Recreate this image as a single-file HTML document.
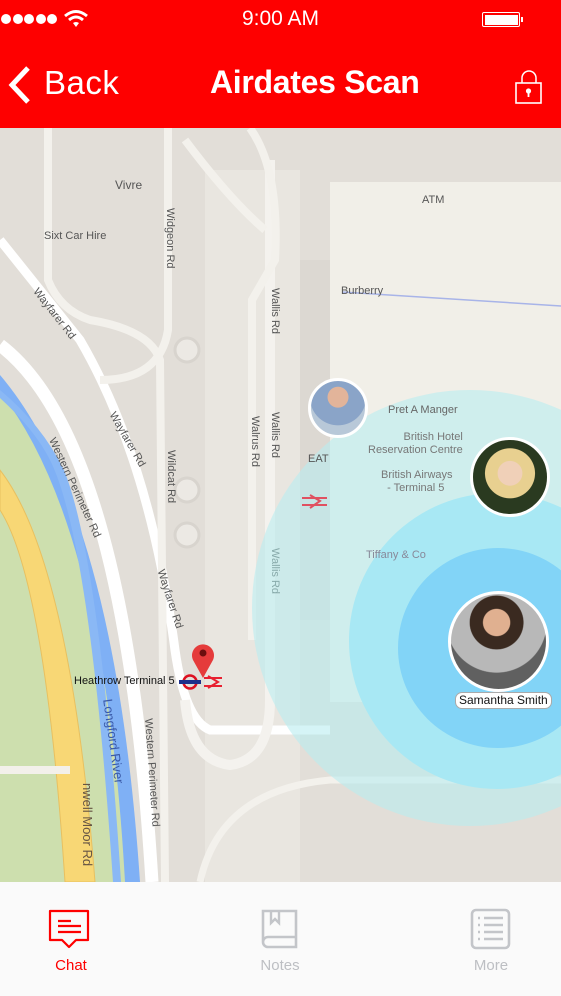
<!DOCTYPE html>
<html><head><meta charset="utf-8">
<style>
*{margin:0;padding:0;box-sizing:border-box}
body{width:561px;height:996px;overflow:hidden;font-family:"Liberation Sans",sans-serif;background:#fafafa;position:relative}
.hdr{position:absolute;left:0;top:0;width:561px;height:128px;background:#fe0000;color:#fff}
.map{position:absolute;left:0;top:128px;width:561px;height:754px;overflow:hidden;background:#e2ded8}
.tab{position:absolute;top:882px;left:0;width:561px;height:114px;background:#fafafa}
.t{position:absolute;font-size:11px;color:#555;white-space:nowrap}
.av{position:absolute;border-radius:50%;border:3px solid #fff;overflow:hidden}
.d{width:10px;height:10px;border-radius:50%;background:#fff;display:block}
</style></head><body>
<div class="hdr">
  <div style="position:absolute;left:1px;top:14px;display:flex;gap:1.5px">
    <span class="d"></span><span class="d"></span><span class="d"></span><span class="d"></span><span class="d"></span>
  </div>
  <svg style="position:absolute;left:63px;top:9px" width="26" height="20" viewBox="0 0 26 20"><path d="M2 7 Q13 -2 24 7" stroke="#fff" stroke-width="3" fill="none"/><path d="M6 11 Q13 5 20 11" stroke="#fff" stroke-width="3" fill="none"/><path d="M13 18 L10 14 Q13 12 16 14Z" fill="#fff"/></svg>
  <div style="position:absolute;left:0;width:561px;top:7px;text-align:center;font-size:21px">9:00 AM</div>
  <div style="position:absolute;left:482px;top:12px;width:38px;height:15px;border:1.5px solid #fff;border-radius:2px;padding:1.5px"><div style="background:#fff;width:100%;height:100%"></div></div>
  <div style="position:absolute;left:521px;top:17px;width:2px;height:5px;background:#fff"></div>
  <svg style="position:absolute;left:6px;top:65px" width="26" height="40" viewBox="0 0 26 40"><path d="M22 3 L6 20 L22 37" stroke="#fff" stroke-width="5" fill="none"/></svg>
  <div style="position:absolute;left:44px;top:64px;font-size:33px;font-weight:300;letter-spacing:0.5px">Back</div>
  <div style="position:absolute;left:210px;top:64px;font-size:32px;font-weight:bold;letter-spacing:-0.3px">Airdates Scan</div>
  <svg style="position:absolute;left:513px;top:69px" width="32" height="36" viewBox="0 0 32 36"><path d="M9 14 V9 A7 7 0 0 1 23 9 V14" stroke="#fff" stroke-width="1.5" fill="none"/><rect x="3" y="14" width="25" height="20" stroke="#fff" stroke-width="1.6" fill="none"/><circle cx="15.5" cy="22" r="2.6" fill="#fff"/><rect x="14.6" y="23" width="1.8" height="5" fill="#fff"/></svg>
</div>

<div class="map">
<svg width="561" height="754" viewBox="0 128 561 754" style="position:absolute;left:0;top:0">
  <rect x="205" y="170" width="95" height="712" fill="#e9e6e0"/>
  <rect x="330" y="182" width="231" height="520" fill="#f1efe8"/>
  <rect x="300" y="260" width="30" height="360" fill="#dcd8d2"/>
  <path d="M0 375 Q115 510 140 882 L0 882Z" fill="#7fb0f5"/>
  <path d="M0 392 Q105 525 125 882 L0 882Z" fill="#cddfae"/>
  <path d="M0 398 Q35 430 50 460 Q90 540 113 882 L121 882 Q100 560 64 470 Q42 425 0 390Z" fill="#8ab8f5"/>
  <path d="M0 470 Q70 560 95 882 L65 882 Q45 580 0 510Z" fill="#f8d775" stroke="#e8c060" stroke-width="1"/>
  <path d="M0 770 L70 770" stroke="#f3f0ea" stroke-width="8"/>
  <path d="M0 345 Q125 440 152 882" stroke="#fff" stroke-width="13" fill="none"/>
  <path d="M0 240 Q40 290 80 340 Q150 460 175 650 Q185 720 210 730 L330 730" stroke="#fff" stroke-width="9" fill="none"/>
  <path d="M185 700 Q190 760 230 765 Q270 760 270 700 L270 160" stroke="#f4f2ee" stroke-width="10" fill="none"/>
  <path d="M48 128 L48 280 Q60 310 90 320 Q150 330 160 360 L165 882" stroke="#f3f1ec" stroke-width="8" fill="none"/>
  <path d="M168 128 L168 330 Q160 380 100 380" stroke="#f3f1ec" stroke-width="8" fill="none"/>
  <path d="M250 128 Q280 170 275 260 L252 300 L252 640" stroke="#f3f1ec" stroke-width="8" fill="none"/>
  <path d="M185 140 Q230 200 265 230" stroke="#f3f1ec" stroke-width="8" fill="none"/>
  <path d="M200 882 Q220 790 330 780 L561 780" stroke="#f3f1ec" stroke-width="7" fill="none"/>
  <circle cx="187" cy="350" r="12" fill="#ece9e4" stroke="#d8d4ce" stroke-width="3"/>
  <circle cx="187" cy="490" r="12" fill="#ece9e4" stroke="#d8d4ce" stroke-width="3"/>
  <circle cx="187" cy="535" r="12" fill="#ece9e4" stroke="#d8d4ce" stroke-width="3"/>
  <path d="M342 292 L561 306" stroke="#a8b4e8" stroke-width="1.5"/>
  <circle cx="470" cy="608" r="218" fill="#b9ecf0" fill-opacity="0.6"/>
  <circle cx="497" cy="641" r="148" fill="#a8e8f4"/>
  <circle cx="498" cy="648" r="100" fill="#82d4f7"/>
  <path d="M203 678 L193 660 A11 11 0 1 1 213 660Z" fill="#e53b3b"/>
  <circle cx="203" cy="653" r="3.5" fill="#6b0e0e"/>
  <circle cx="190" cy="682" r="6.5" fill="none" stroke="#dd1020" stroke-width="2.5"/>
  <rect x="179" y="680" width="22" height="4" fill="#1f2f8a"/>
  <path d="M204 678 L222 678 M204 686 L222 686 M208 676 L218 682 L208 688" stroke="#e82030" stroke-width="2" fill="none"/>
  <path d="M302 498 L327 498 M302 505 L327 505 M310 495 L320 501 L310 508" stroke="#e05060" stroke-width="2" fill="none"/>
</svg>
<div class="t" style="left:115px;top:50px;font-size:12px">Vivre</div>
<div class="t" style="left:44px;top:102px;font-size:11px">Sixt Car Hire</div>
<div class="t" style="left:422px;top:66px">ATM</div>
<div class="t" style="left:341px;top:157px">Burberry</div>
<div class="t" style="left:388px;top:276px;color:#666">Pret A Manger</div>
<div class="t" style="left:368px;top:303px;color:#777;text-align:right;line-height:13px">&nbsp;&nbsp;&nbsp;&nbsp;&nbsp;&nbsp;&nbsp;&nbsp;British Hotel<br>Reservation Centre</div>
<div class="t" style="left:381px;top:341px;color:#777;line-height:13px">British Airways<br>&nbsp;&nbsp;- Terminal 5</div>
<div class="t" style="left:366px;top:421px;color:#889">Tiffany &amp; Co</div>
<div class="t" style="left:308px;top:325px">EAT</div>
<div class="t" style="left:74px;top:547px;color:#111">Heathrow Terminal 5</div>
<div class="t" style="top:80px;transform:rotate(90deg);transform-origin:0 0;left:176px">Widgeon Rd</div>
<div class="t" style="left:281px;top:160px;transform:rotate(90deg);transform-origin:0 0">Wallis Rd</div>
<div class="t" style="left:281px;top:284px;transform:rotate(90deg);transform-origin:0 0">Wallis Rd</div>
<div class="t" style="left:261px;top:288px;transform:rotate(90deg);transform-origin:0 0">Walrus Rd</div>
<div class="t" style="left:281px;top:420px;transform:rotate(90deg);transform-origin:0 0;color:#8aa">Wallis Rd</div>
<div class="t" style="left:177px;top:322px;transform:rotate(90deg);transform-origin:0 0">Wildcat Rd</div>
<div class="t" style="left:40px;top:158px;transform:rotate(52deg);transform-origin:0 0">Wayfarer Rd</div>
<div class="t" style="left:117px;top:282px;transform:rotate(60deg);transform-origin:0 0">Wayfarer Rd</div>
<div class="t" style="left:166px;top:440px;transform:rotate(72deg);transform-origin:0 0">Wayfarer Rd</div>
<div class="t" style="left:57px;top:308px;transform:rotate(65deg);transform-origin:0 0">Western Perimeter Rd</div>
<div class="t" style="left:154px;top:590px;transform:rotate(86deg);transform-origin:0 0">Western Perimeter Rd</div>
<div class="t" style="left:115px;top:570px;transform:rotate(82deg);transform-origin:0 0;color:#3a5aa8;font-size:13px">Longford River</div>
<div class="t" style="left:95px;top:655px;transform:rotate(90deg);transform-origin:0 0;color:#654;font-size:13px">nwell Moor Rd</div>
<div class="av" style="left:308px;top:250px;width:60px;height:60px;background:radial-gradient(circle at 50% 30%,#e2b49a 0 22%,#8aa4c8 23% 60%,#b8c8d8 61%)"></div>
<div class="av" style="left:470px;top:309px;width:80px;height:80px;background:radial-gradient(circle at 50% 45%,#f0d0b8 0 22%,#e8d090 23% 45%,#2a3a20 46%)"></div>
<div class="av" style="left:448px;top:463px;width:101px;height:101px;border-width:3px;background:radial-gradient(circle at 48% 30%,#e0b090 0 16%,#3a2a20 17% 32%,#b8b8b8 33% 60%,#606060 61%)"></div>
<div style="position:absolute;left:455px;top:564px;padding:0 3px;background:#fff;border:1px solid #aaa;border-radius:7px;font-size:12px;color:#111;line-height:15px">Samantha Smith</div>
</div>

<div class="tab">
  <svg style="position:absolute;left:48px;top:27px" width="42" height="40" viewBox="0 0 42 40"><path d="M2 2 H40 V31 H28 L21 38 L14 31 H2Z" fill="none" stroke="#fe0000" stroke-width="2.2" stroke-linejoin="round"/><path d="M10 12 H23 M10 17 H33 M10 23 H33" stroke="#fe0000" stroke-width="2.2"/></svg>
  <div style="position:absolute;left:0;width:142px;top:75px;text-align:center;font-size:15px;color:#fe0000">Chat</div>
  <svg style="position:absolute;left:259px;top:26px" width="42" height="42" viewBox="0 0 42 42"><path d="M4 34 V3 H37 V39 H9 A5 5 0 0 1 4 34 A5 5 0 0 1 9 29 H37" fill="none" stroke="#c3c5c9" stroke-width="2.6"/><path d="M12 3 V15 L16 11 L20 15 V3" fill="none" stroke="#c3c5c9" stroke-width="2.4"/></svg>
  <div style="position:absolute;left:210px;width:140px;top:75px;text-align:center;font-size:15px;color:#bdbfc3">Notes</div>
  <svg style="position:absolute;left:470px;top:26px" width="42" height="42" viewBox="0 0 42 42"><rect x="2" y="2" width="37" height="38" rx="4" fill="none" stroke="#c3c5c9" stroke-width="2.6"/><path d="M8 10 H10 M14 10 H33 M8 17 H10 M14 17 H33 M8 24 H10 M14 24 H33 M8 31 H10 M14 31 H33" stroke="#c3c5c9" stroke-width="2.4"/></svg>
  <div style="position:absolute;left:421px;width:140px;top:75px;text-align:center;font-size:15px;color:#bdbfc3">More</div>
</div>
</body></html>
